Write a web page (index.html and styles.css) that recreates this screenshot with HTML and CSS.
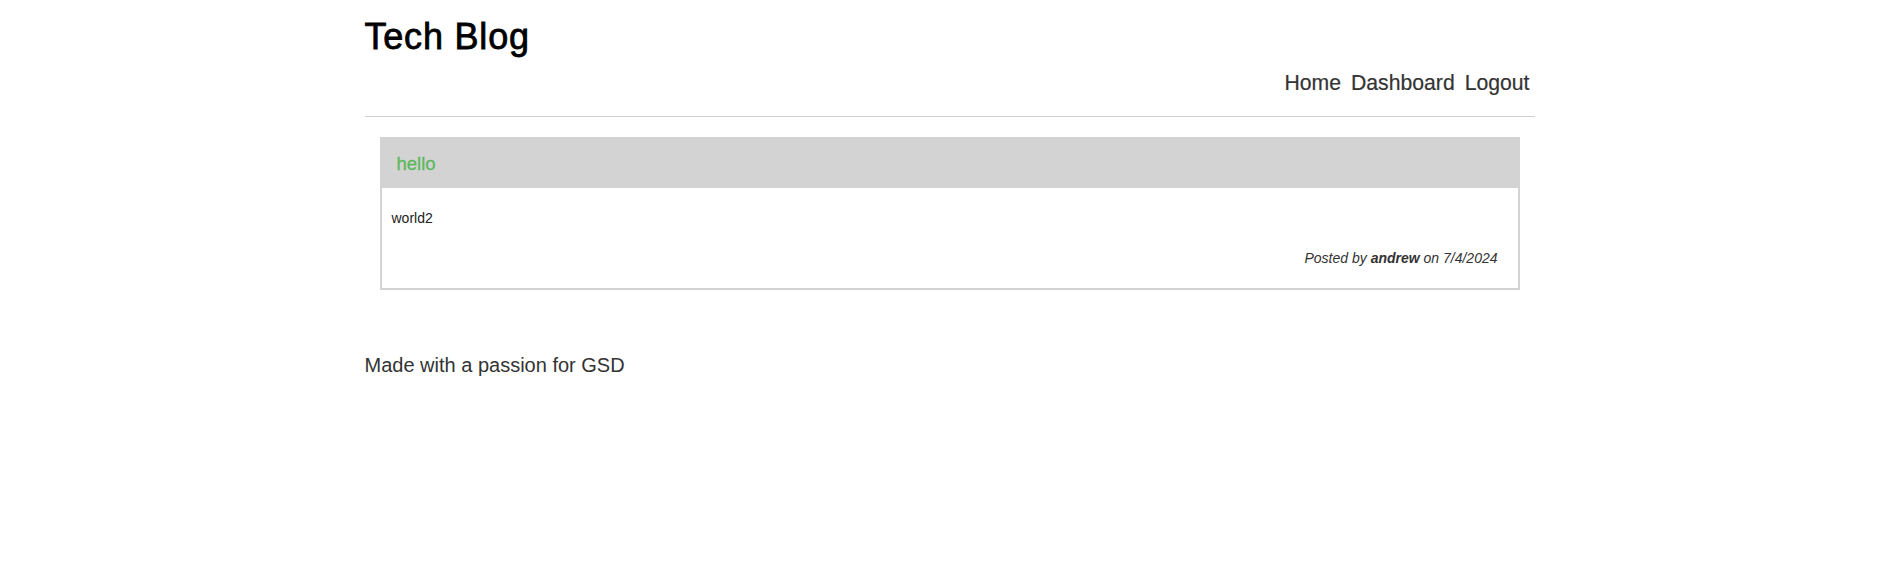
FILE: index.html
```html
<!DOCTYPE html>
<html lang="en">
<head>
<meta charset="utf-8">
<title>Tech Blog</title>
<link rel="stylesheet" href="styles.css">
</head>
<body>
<div class="container">
  <header class="site-header">
    <h1 class="site-title">Tech Blog</h1>
    <nav class="site-nav">
      <a class="nav-link" href="#">Home</a>
      <a class="nav-link" href="#">Dashboard</a>
      <a class="nav-link" href="#">Logout</a>
    </nav>
  </header>
  <main class="main">
    <article class="post-card">
      <div class="post-head">
        <h2 class="post-title">hello</h2>
      </div>
      <div class="post-body">
        <p class="post-content">world2</p>
        <p class="post-meta">Posted by <strong>andrew</strong> on 7/4/2024</p>
      </div>
    </article>
  </main>
  <footer class="site-footer">Made with a passion for GSD</footer>
</div>
</body>
</html>
```

FILE: styles.css
```css
* { box-sizing: border-box; }
html, body {
  margin: 0;
  padding: 0;
  background: #fff;
}
body {
  font-family: "Liberation Sans", Arial, Helvetica, sans-serif;
  color: #333;
}
.container {
  width: 1174px;
  padding-left: 4px;
  margin: 0 auto;
}
.site-header {
  padding-top: 16px;
  padding-bottom: 21px;
  border-bottom: 1px solid #cfcfcf;
}
.site-title {
  margin: 0;
  font-size: 36px;
  line-height: 41px;
  font-weight: normal;
  letter-spacing: 0.8px;
  color: #000;
  -webkit-text-stroke: 0.8px #000;
}
.site-nav {
  display: flex;
  justify-content: flex-end;
  margin-top: 14px;
}
.nav-link {
  font-size: 21.2px;
  line-height: 24px;
  color: #333;
  text-decoration: none;
  padding: 0 5px;
  -webkit-text-stroke: 0.2px #333;
}
.main {
  margin-top: 20px;
  padding: 0 15px;
}
.post-card {
  border: 2px solid #d3d3d3;
}
.post-head {
  background: #d3d3d3;
  padding: 14px 15px;
}
.post-title {
  margin: 0;
  font-size: 18.5px;
  line-height: 21px;
  font-weight: normal;
  color: #5cb85c;
  -webkit-text-stroke: 0.3px #5cb85c;
}
.post-body {
  padding: 22px 20px 22px 10px;
}
.post-content {
  margin: 0;
  font-size: 14px;
  line-height: 16px;
  color: #222;
}
.post-meta {
  margin: 24px 0 0;
  font-size: 14px;
  line-height: 16px;
  font-style: italic;
  text-align: right;
  color: #333;
}
.site-footer {
  margin-top: 64px;
  font-size: 20px;
  line-height: 23px;
  color: #333;
}
```
